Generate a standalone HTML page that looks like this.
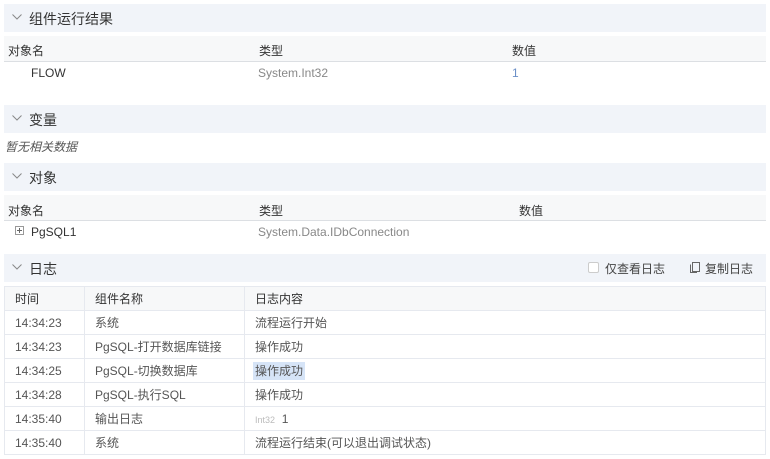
<!DOCTYPE html>
<html><head><meta charset="utf-8"><style>
*{margin:0;padding:0;box-sizing:border-box}
body{width:770px;height:459px;background:#fff;font-family:"Liberation Sans","Noto Sans CJK SC",sans-serif;font-size:12px;color:#333;position:relative;overflow:hidden}
.a{position:absolute;white-space:nowrap}
.hd{position:absolute;left:4px;width:762px;height:28px;background:#f1f4f9}
.hd .t{position:absolute;left:25px;top:5px;font-size:14px;color:#333}
.hd svg{position:absolute;left:8px;top:10px}
.th{position:absolute;left:4px;width:762px;height:26px;background:#f7f8f9;border-bottom:1px solid #dcdfe3}
.gray{color:#888}
.lt{position:absolute;left:4px;top:286px;width:762px;border-collapse:collapse}
.lt td{border:1px solid #e6e9ef;height:24px;padding:0 10px;font-size:12px;color:#555}
.lt tr:first-child td{background:#f7f8f9;color:#333}
</style></head><body>
<div class="hd" style="top:4px"><svg width="10" height="6"><path d="M0.5 0.5L5 5L9.5 0.5" stroke="#888" fill="none"/></svg><span class="t">组件运行结果</span></div>
<div class="th" style="top:36px"></div>
<span class="a" style="left:8px;top:42px">对象名</span><span class="a" style="left:259px;top:42px">类型</span><span class="a" style="left:512px;top:42px">数值</span>
<span class="a" style="left:31px;top:66px">FLOW</span><span class="a gray" style="left:258px;top:66px">System.Int32</span><span class="a" style="left:512px;top:66px;color:#6b8fc7">1</span>

<div class="hd" style="top:105px"><svg width="10" height="6"><path d="M0.5 0.5L5 5L9.5 0.5" stroke="#888" fill="none"/></svg><span class="t">变量</span></div>
<span class="a" style="left:5px;top:138px;font-style:italic;color:#555">暂无相关数据</span>

<div class="hd" style="top:163px"><svg width="10" height="6"><path d="M0.5 0.5L5 5L9.5 0.5" stroke="#888" fill="none"/></svg><span class="t">对象</span></div>
<div class="th" style="top:195px"></div>
<span class="a" style="left:8px;top:202px">对象名</span><span class="a" style="left:259px;top:202px">类型</span><span class="a" style="left:519px;top:202px">数值</span>
<svg class="a" style="left:15px;top:226px" width="10" height="10"><rect x="0.5" y="0.5" width="8" height="8" fill="none" stroke="#999"/><path d="M2 4.5H7M4.5 2V7" stroke="#666"/></svg>
<span class="a" style="left:31px;top:225px">PgSQL1</span><span class="a gray" style="left:258px;top:225px">System.Data.IDbConnection</span>

<div class="hd" style="top:254px"><svg width="10" height="6"><path d="M0.5 0.5L5 5L9.5 0.5" stroke="#888" fill="none"/></svg><span class="t">日志</span>
<span style="position:absolute;left:584px;top:8px;width:11px;height:11px;border:1px solid #ccc;background:#fff;border-radius:2px"></span>
<span style="position:absolute;left:601px;top:6px;color:#444">仅查看日志</span>
<svg style="position:absolute;left:686px;top:8px" width="11" height="11"><rect x="2.5" y="0.5" width="7" height="9" fill="none" stroke="#666"/><path d="M0.5 2.5V10.5H7" fill="none" stroke="#666"/></svg>
<span style="position:absolute;left:701px;top:6px;color:#444">复制日志</span></div>
<table class="lt">
<tr><td style="width:80px">时间</td><td style="width:160px">组件名称</td><td>日志内容</td></tr>
<tr><td>14:34:23</td><td>系统</td><td>流程运行开始</td></tr>
<tr><td>14:34:23</td><td>PgSQL-打开数据库链接</td><td>操作成功</td></tr>
<tr><td>14:34:25</td><td>PgSQL-切换数据库</td><td><span style="background:#d6e4f7;padding:2px 2px;margin-left:-2px">操作成功</span></td></tr>
<tr><td>14:34:28</td><td>PgSQL-执行SQL</td><td>操作成功</td></tr>
<tr><td>14:35:40</td><td>输出日志</td><td><span style="font-size:9px;color:#bbb">Int32</span>&nbsp; 1</td></tr>
<tr><td>14:35:40</td><td>系统</td><td>流程运行结束(可以退出调试状态)</td></tr>
</table>
</body></html>
